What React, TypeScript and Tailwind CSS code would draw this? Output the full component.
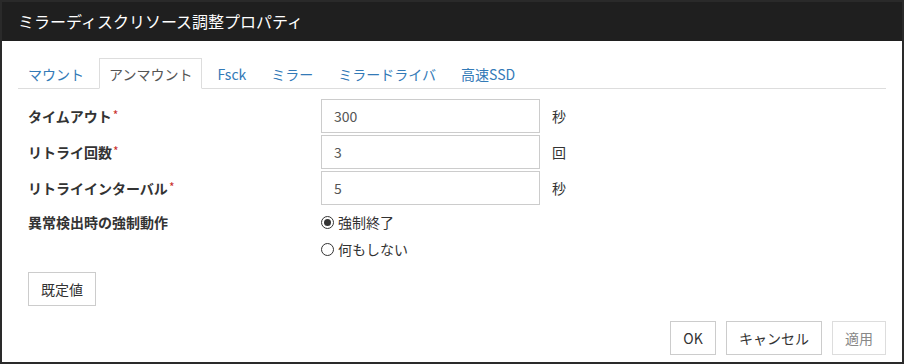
import React from "react";

const tabs = ["マウント", "アンマウント", "Fsck", "ミラー", "ミラードライバ", "高速SSD"];

const fields = [
  { label: "タイムアウト", value: "300", unit: "秒" },
  { label: "リトライ回数", value: "3", unit: "回" },
  { label: "リトライインターバル", value: "5", unit: "秒" },
];

function Radio({ checked, label }: { checked?: boolean; label: string }) {
  return (
    <label className="flex items-center h-[27px] gap-[4px] text-[14px] text-[#333]">
      <span className="w-[13px] h-[13px] rounded-full border border-[#333] bg-white flex items-center justify-center">
        {checked && <span className="w-[7px] h-[7px] rounded-full bg-[#333]" />}
      </span>
      <span>{label}</span>
    </label>
  );
}

export default function App() {
  const active = 1;
  return (
    <div
      className="w-[904px] h-[364px] border-2 border-[#2a2a2a] bg-white flex flex-col"
      style={{ fontFamily: '"Noto Sans CJK JP", "Noto Sans", sans-serif' }}
    >
      <div className="h-[39px] bg-[#1f1f1f] text-white text-[16px] leading-[39px] px-[16px] shrink-0">
        ミラーディスクリソース調整プロパティ
      </div>

      <div className="px-[16px] flex-1 flex flex-col">
        {/* tabs */}
        <div className="mt-[17px] flex gap-[5px] border-b border-[#ddd] h-[31px]">
          {tabs.map((t, i) => (
            <div
              key={t}
              className={`px-[9px] h-[31px] text-[14px] leading-[30px] ${
                i === active
                  ? "border border-[#ddd] border-b-white bg-white text-[#555]"
                  : "border border-transparent text-[#337ab7]"
              }`}
            >
              {t}
            </div>
          ))}
        </div>

        {/* form */}
        <div className="mt-[10px] flex flex-col gap-[2px]">
          {fields.map((f) => (
            <div key={f.label} className="flex items-center h-[34px]">
              <div className="w-[303px] pl-[10px] text-[14px] font-bold text-[#333]">
                {f.label}
                <sup className="text-[#c9302c] font-normal text-[12px] ml-[1px] relative top-[-2px]">*</sup>
              </div>
              <div className="w-[219px] h-[34px] border border-[#ccc] px-[12px] text-[14px] leading-[32px] text-[#555]">
                {f.value}
              </div>
              <div className="ml-[12px] text-[14px] text-[#333]">{f.unit}</div>
            </div>
          ))}
        </div>

        <div className="flex mt-[4px]">
          <div className="w-[303px] pl-[10px] text-[14px] font-bold text-[#333] leading-[27px]">
            異常検出時の強制動作
          </div>
          <div className="flex flex-col">
            <Radio checked label="強制終了" />
            <Radio label="何もしない" />
          </div>
        </div>

        <div className="pl-[10px] mt-[9px]">
          <button className="w-[68px] h-[34px] border border-[#ccc] bg-white text-[14px] text-[#333]">
            既定値
          </button>
        </div>

        <div className="flex justify-end gap-[10px] mt-[15px]">
          <button className="w-[46px] h-[34px] border border-[#ccc] bg-white text-[14px] text-[#333]">
            OK
          </button>
          <button className="w-[96px] h-[34px] border border-[#ccc] bg-white text-[14px] text-[#333]">
            キャンセル
          </button>
          <button className="w-[54px] h-[34px] border border-[#ddd] bg-white text-[14px] text-[#888]">
            適用
          </button>
        </div>
      </div>
    </div>
  );
}
